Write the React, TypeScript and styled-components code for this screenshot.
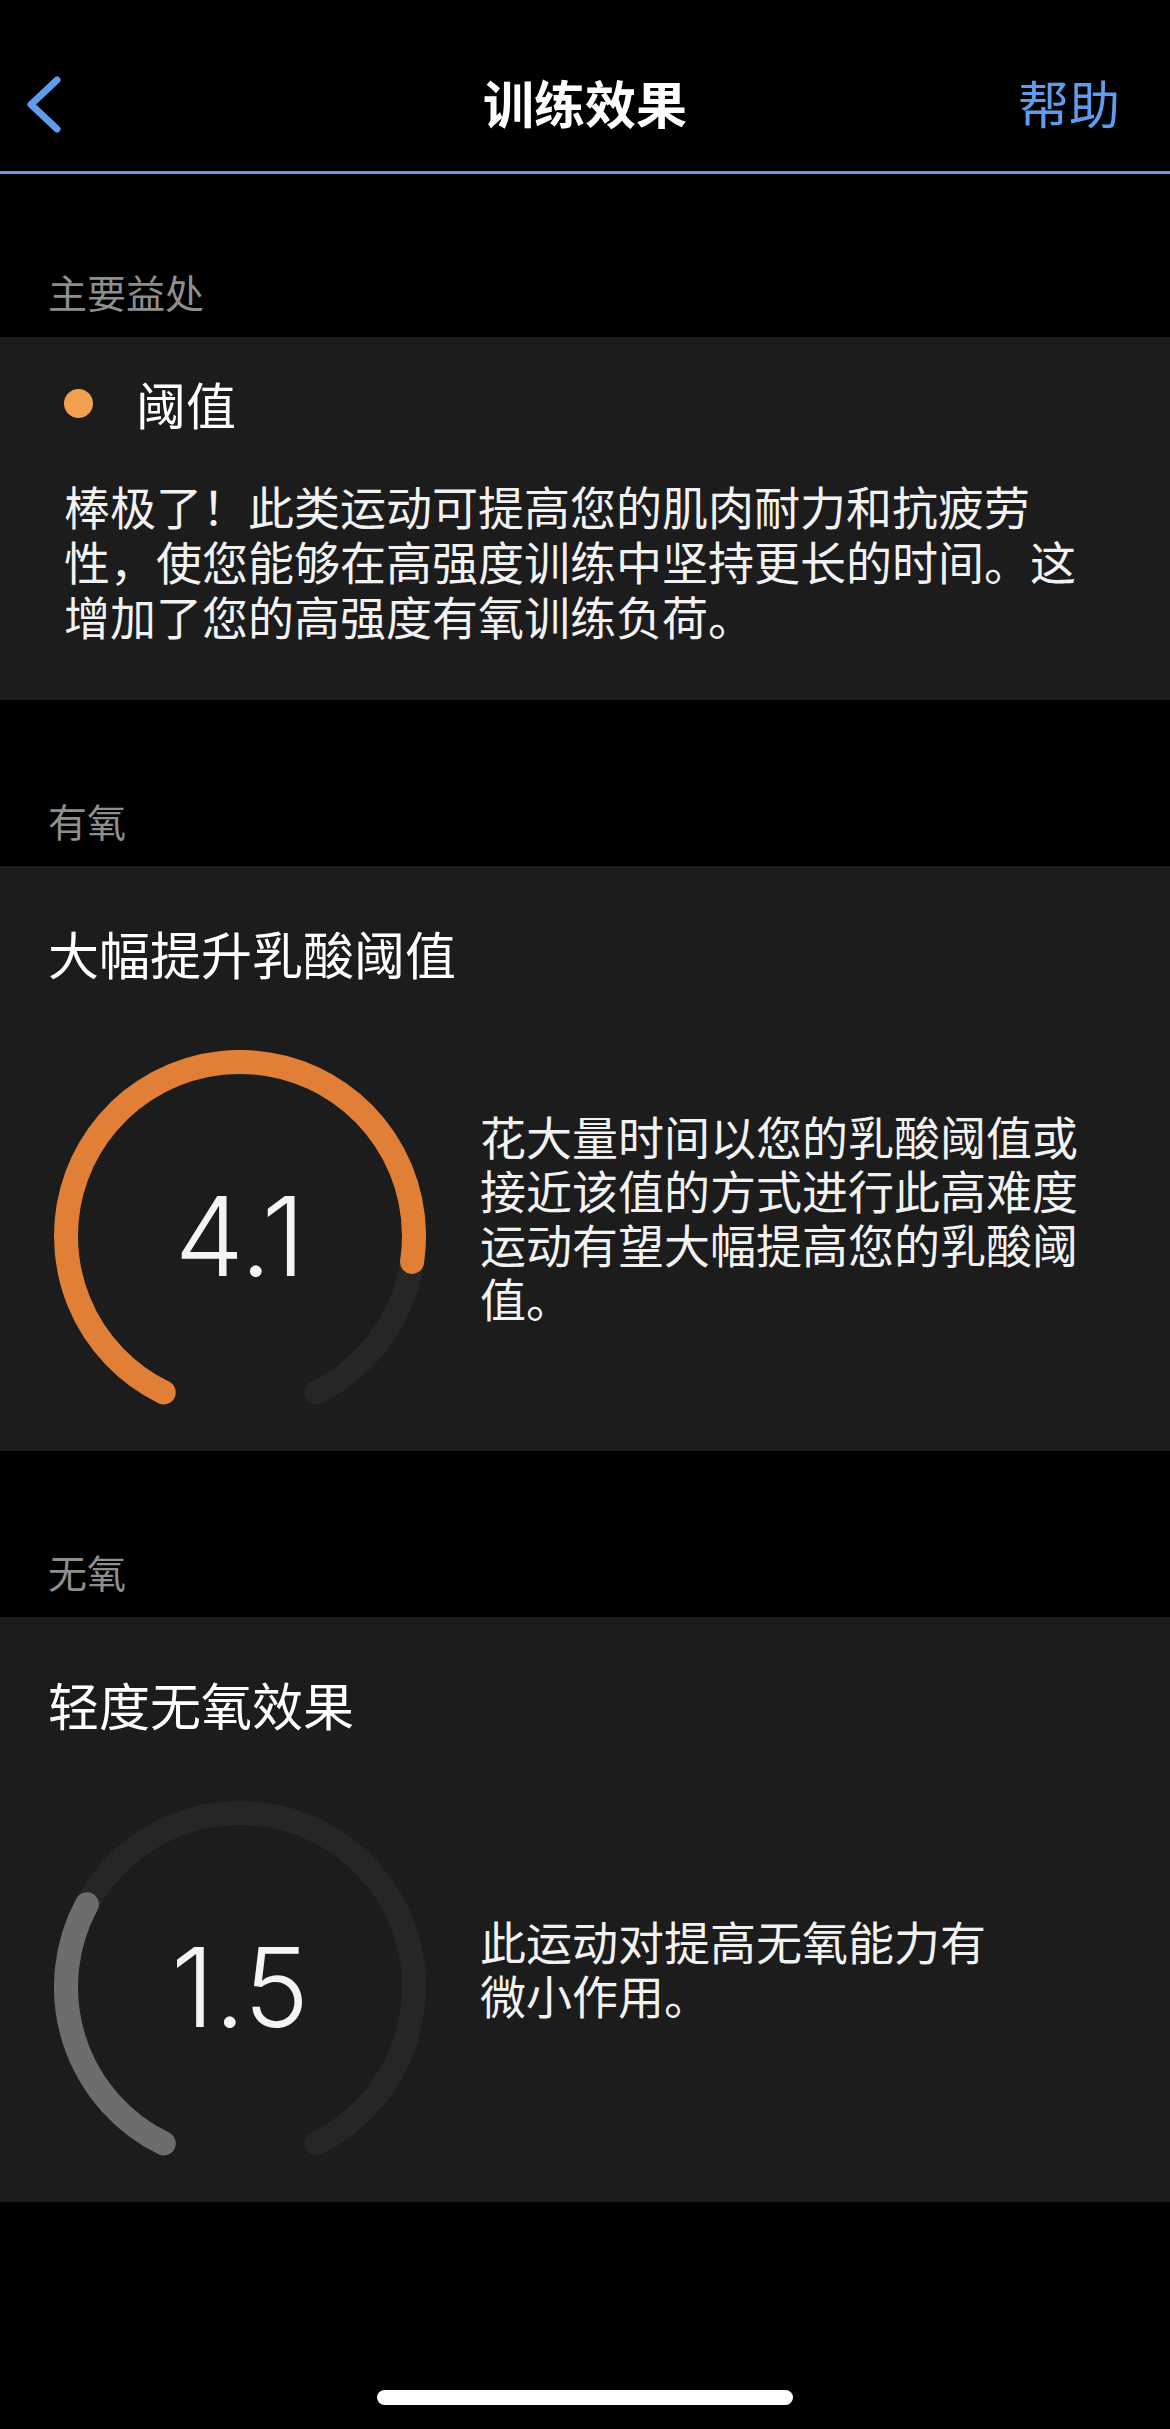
import React from "react";
import styled, { createGlobalStyle } from "styled-components";

const GlobalStyle = createGlobalStyle`
  html, body {
    margin: 0;
    padding: 0;
    background: #000;
  }
  body {
    font-family: "Noto Sans CJK SC", "Noto Sans", sans-serif;
    -webkit-font-smoothing: antialiased;
  }
  * { box-sizing: border-box; }
`;

const Page = styled.div`
  width: 1170px;
  min-height: 2429px;
  background: #000;
  display: flex;
  flex-direction: column;
`;

const NavBar = styled.header`
  height: 174px;
  padding-top: 55px;
  padding-bottom: 22px;
  border-bottom: 3px solid #6a9be0;
  display: grid;
  grid-template-columns: 1fr auto 1fr;
  align-items: center;
`;

const BackButton = styled.button`
  justify-self: start;
  margin-left: 25px;
  padding: 0;
  border: 0;
  background: none;
  display: flex;
  align-items: center;
  height: 66px;
`;

const NavTitle = styled.h1`
  margin: 0;
  font-size: 51px;
  line-height: 60px;
  font-weight: 700;
  color: #fff;
`;

const NavAction = styled.span`
  justify-self: end;
  margin-right: 50px;
  font-size: 51px;
  line-height: 60px;
  color: #5f9cec;
`;

const SectionLabel = styled.div<{ $height: number }>`
  height: ${(p) => p.$height}px;
  display: flex;
  align-items: flex-end;
  padding: 0 0 22px 48px;
  font-size: 39px;
  line-height: 47px;
  color: #8e8e8e;
`;

const Card = styled.section<{ $pad: string }>`
  background: #1c1c1c;
  padding: ${(p) => p.$pad};
`;

const BenefitHeader = styled.div`
  display: flex;
  align-items: center;
  gap: 43px;
  height: 60px;
`;

const Dot = styled.span`
  width: 29px;
  height: 29px;
  border-radius: 50%;
  background: #f0a04f;
  flex-shrink: 0;
`;

const BenefitName = styled.div`
  font-size: 50px;
  line-height: 60px;
  color: #fff;
`;

const BenefitText = styled.p`
  margin: 45px 0 0;
  font-size: 46px;
  line-height: 55px;
  color: #f2f2f2;
`;

const EffectTitle = styled.h2`
  margin: 0;
  font-size: 51px;
  line-height: 60px;
  font-weight: 400;
  color: #fff;
`;

const GaugeRow = styled.div`
  margin-top: 67px;
  display: flex;
  align-items: center;
  gap: 54px;
  padding-left: 6px;
  padding-right: 30px;
`;

const GaugeBox = styled.div`
  position: relative;
  width: 372px;
  height: 372px;
  flex-shrink: 0;
`;

const GaugeValue = styled.div`
  position: absolute;
  top: 50%;
  left: 50%;
  transform: translate(-50%, -50%);
  font-family: Inter, "Liberation Sans", sans-serif;
  font-weight: 300;
  font-size: 110px;
  line-height: 1;
  white-space: nowrap;
  color: #f4f4f4;
`;

const Description = styled.p`
  margin: 0;
  flex: 1;
  padding-bottom: 40px;
  font-size: 46px;
  line-height: 54px;
  white-space: pre-line;
  color: #f2f2f2;
`;

const Footer = styled.footer`
  padding: 188px 0 24px;
  display: flex;
  justify-content: center;
`;

const HomeIndicator = styled.div`
  width: 416px;
  height: 15px;
  border-radius: 8px;
  background: #fff;
`;

const START = 116;
const SWEEP = 308;

function arcPath(cx: number, cy: number, r: number, startDeg: number, sweepDeg: number) {
  const s = (startDeg * Math.PI) / 180;
  const e = ((startDeg + sweepDeg) * Math.PI) / 180;
  const x1 = cx + r * Math.cos(s);
  const y1 = cy + r * Math.sin(s);
  const x2 = cx + r * Math.cos(e);
  const y2 = cy + r * Math.sin(e);
  const large = sweepDeg > 180 ? 1 : 0;
  return `M ${x1.toFixed(2)} ${y1.toFixed(2)} A ${r} ${r} 0 ${large} 1 ${x2.toFixed(2)} ${y2.toFixed(2)}`;
}

function Gauge({ value, color }: { value: number; color: string }) {
  const fraction = Math.max(0, Math.min(1, value / 5));
  return (
    <GaugeBox>
      <svg width="372" height="372" viewBox="0 0 372 372">
        <path
          d={arcPath(186, 186, 174, START, SWEEP)}
          fill="none"
          stroke="#262626"
          strokeWidth="24"
          strokeLinecap="round"
        />
        <path
          d={arcPath(186, 186, 174, START, SWEEP * fraction)}
          fill="none"
          stroke={color}
          strokeWidth="24"
          strokeLinecap="round"
        />
      </svg>
      <GaugeValue>{value.toFixed(1)}</GaugeValue>
    </GaugeBox>
  );
}

function ChevronLeft() {
  return (
    <svg width="36" height="66" viewBox="0 0 36 66">
      <path
        d="M32 11 L6 35.5 L32 60"
        fill="none"
        stroke="#5f9cec"
        strokeWidth="7"
        strokeLinecap="round"
        strokeLinejoin="round"
      />
    </svg>
  );
}

export default function App() {
  return (
    <>
      <GlobalStyle />
      <Page>
        <NavBar>
          <BackButton aria-label="返回">
            <ChevronLeft />
          </BackButton>
          <NavTitle>训练效果</NavTitle>
          <NavAction>帮助</NavAction>
        </NavBar>

        <SectionLabel $height={163}>主要益处</SectionLabel>
        <Card $pad="36px 64px 57px">
          <BenefitHeader>
            <Dot />
            <BenefitName>阈值</BenefitName>
          </BenefitHeader>
          <BenefitText>
            棒极了！此类运动可提高您的肌肉耐力和抗疲劳性，使您能够在高强度训练中坚持更长的时间。这增加了您的高强度有氧训练负荷。
          </BenefitText>
        </Card>

        <SectionLabel $height={166}>有氧</SectionLabel>
        <Card $pad="57px 48px 29px">
          <EffectTitle>大幅提升乳酸阈值</EffectTitle>
          <GaugeRow>
            <Gauge value={4.1} color="#e27f37" />
            <Description>
              花大量时间以您的乳酸阈值或接近该值的方式进行此高难度运动有望大幅提高您的乳酸阈值。
            </Description>
          </GaugeRow>
        </Card>

        <SectionLabel $height={166}>无氧</SectionLabel>
        <Card $pad="57px 48px 29px">
          <EffectTitle>轻度无氧效果</EffectTitle>
          <GaugeRow>
            <Gauge value={1.5} color="#6d6d6d" />
            <Description>{"此运动对提高无氧能力有\n微小作用。"}</Description>
          </GaugeRow>
        </Card>

        <Footer>
          <HomeIndicator />
        </Footer>
      </Page>
    </>
  );
}
